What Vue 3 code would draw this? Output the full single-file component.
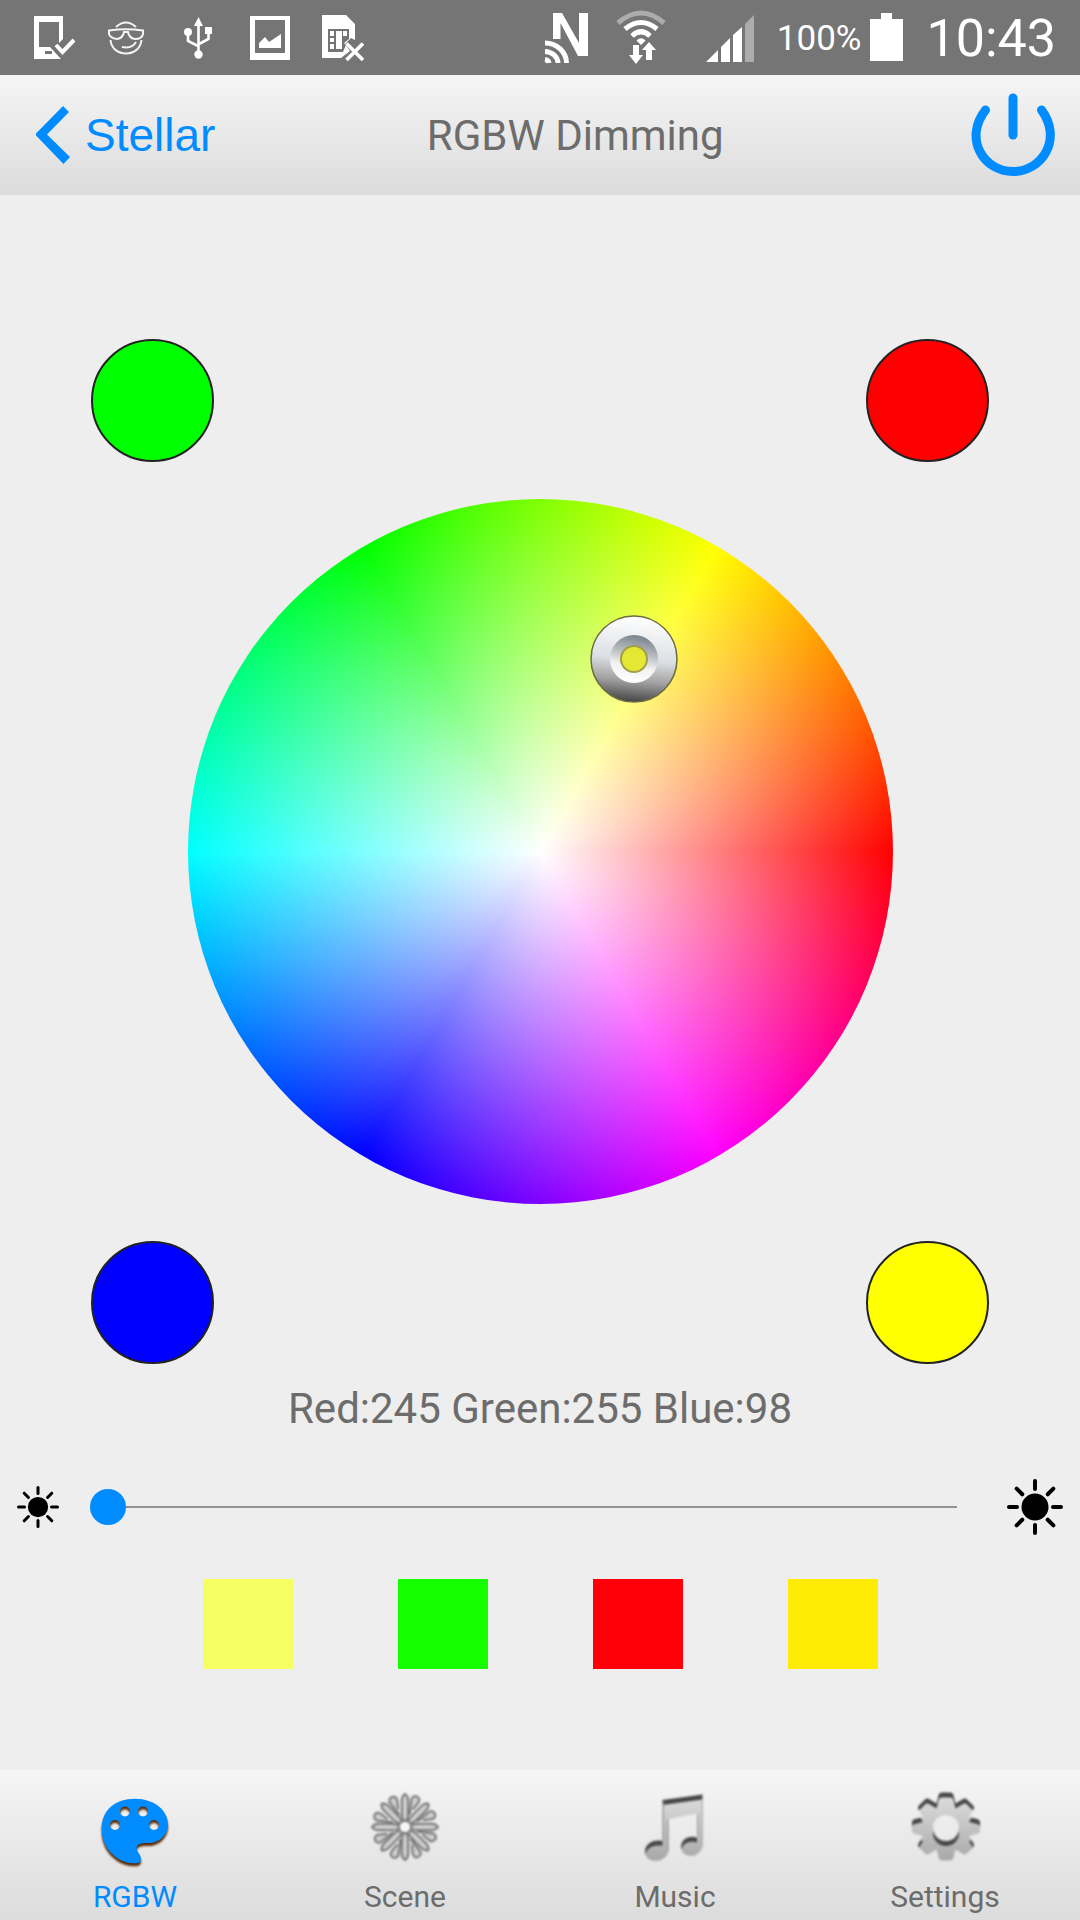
<script setup>
import { ref } from 'vue'

const brightness = ref(0)
const topPresets = [
  { name: 'Green', color: '#00ff00' },
  { name: 'Red', color: '#ff0000' },
]
const bottomPresets = [
  { name: 'Blue', color: '#0000ff' },
  { name: 'Yellow', color: '#ffff00' },
]
const swatches = ['#f6ff62', '#16ff00', '#ff0009', '#ffec06']
const eighths = [0, 45, 90, 135, 180, 225, 270, 315]
</script>

<template>
  <div class="app">
    <header class="status">
      <div class="notices">
        <svg class="ico" width="48" height="48" viewBox="30 13 48 48" aria-hidden="true">
          <path fill="#fff" fill-rule="evenodd" d="M34 15H63V38L59 42V21H39V46H50L61 58H34ZM45 50V53H52V50Z" />
          <path fill="none" stroke="#fff" stroke-width="4" d="M56 44L62.500 51L74 39" />
        </svg>
        <svg class="ico" width="48" height="48" viewBox="102 13 48 48" fill="none" stroke="#f4f4f4" stroke-width="2" aria-hidden="true">
          <path d="M116 26Q126 17 136 26M110.500 39C112 57 140 57 141.500 39M122 46Q132 48 136 41" />
          <path d="M109 29.500Q126 27 143 29.500V33Q142 38 135 38Q129 37 128 31H124Q123 37 117 38Q110 37 109 33Z" />
        </svg>
        <svg class="ico" width="48" height="48" viewBox="174 13 48 48" aria-hidden="true">
          <path fill="none" stroke="#fff" stroke-width="2.600" d="M198.500 22V54M188 32V40L198 45M208.500 30V38L199 43" />
          <g fill="#fff">
            <path d="M198.500 16L203 25H194ZM205 26H212V33H205Z" />
            <circle cx="188" cy="31" r="4" /><circle cx="198.500" cy="53.500" r="4.200" />
          </g>
        </svg>
        <svg class="ico" width="48" height="48" viewBox="246 13 48 48" fill="#fff" aria-hidden="true">
          <path fill-rule="evenodd" d="M250 15H290V59H250ZM255 19V52H285V19Z" />
          <path d="M259 47V42L265 36L269 41L281 33V47Z" />
        </svg>
        <svg class="ico" width="48" height="48" viewBox="318 13 48 48" aria-hidden="true">
          <path fill="#fff" fill-rule="evenodd" d="M322 14H346L355 23V39L351 37L345 43L350 50L341 57H322ZM328 28V51H343L346 44L344 42L349 38V28Z" />
          <path fill="#fff" d="M330 30h4v5h-4zM336 30h6v18h-6zM343 30h4v5h-4zM330 37h4v4h-4zM330 43h4v5h-4z" />
          <path fill="none" stroke="#fff" stroke-width="3.600" d="M346.500 42.500L363 59M363 42.500L346.500 59" />
        </svg>
      </div>
      <div class="system">
        <svg class="ico" width="48" height="56" viewBox="540 8 48 56" aria-hidden="true">
          <path fill="#fff" d="M551 11H560L577 41V11H586V54H576L558.500 21V37H551Z" />
          <path fill="none" stroke="#fff" stroke-width="5" d="M543 41A21.500 20 0 0 1 564.500 61M543 49.500A13.500 12 0 0 1 556 61M543 57.500A5 4 0 0 1 547 61" />
        </svg>
        <svg class="ico" width="56" height="56" viewBox="612 8 56 56" aria-hidden="true">
          <g fill="none" stroke="#fff" stroke-width="5">
            <path stroke="#acacac" d="M617 21Q640 1 663 21" />
            <path d="M624 27Q640 14 656 27M631 34Q640 25.500 649 34" />
          </g>
          <path fill="#fff" d="M635.500 38.500Q640 34 644.500 38.500L640 43ZM632 43H638V53H642L635 62L628 53H632ZM645 58V48H641L648 40L655 48H651V58Z" />
        </svg>
        <svg class="ico" width="62" height="56" viewBox="692 8 62 56" aria-hidden="true">
          <path fill="#fff" d="M706 60L718 48V60ZM721 45L730 36V60H721ZM733 33L742 25V60H733Z" />
          <path fill="#acacac" d="M745 22L754 13V60H745Z" />
        </svg>
        <div class="charge">
          <span class="percent">100%</span>
          <svg class="ico" width="34" height="56" viewBox="871 8 34 56" aria-hidden="true">
            <path fill="#fff" d="M871 17H882V11H893V17H904V59H871Z" />
          </svg>
        </div>
        <time class="clock">10:43</time>
      </div>
    </header>

    <div class="titlebar">
      <button class="back" type="button">
        <svg width="36" height="60" viewBox="37 105 36 60" aria-hidden="true">
          <path fill="#008cff" d="M36 134.500L64 106L70 112L48 134.500L71 157L64.500 164Z" />
        </svg>
        <span>Stellar</span>
      </button>
      <h1>RGBW Dimming</h1>
      <button class="power" type="button" aria-label="Power">
        <svg width="84" height="84" viewBox="971 93 84 84" fill="none" stroke="#008cff" stroke-width="9" stroke-linecap="round" aria-hidden="true">
          <path d="M985.500 110C963 139 984 171.500 1013 171.500C1042 171.500 1063 139 1041.500 110" />
          <path d="M1013 98V135" />
        </svg>
      </button>
    </div>

    <main>
      <div class="presets">
        <button v-for="p in topPresets" :key="p.name" type="button" class="preset" :aria-label="p.name" :style="{ background: p.color }"></button>
      </div>
      <div class="wheel" role="img" aria-label="Color wheel">
        <svg class="puck" width="90" height="90" viewBox="0 0 90 90" aria-hidden="true">
          <defs>
            <linearGradient id="metal" x1=".55" y1="0" x2=".45" y2="1">
              <stop offset="0" stop-color="#fff" /><stop offset=".5" stop-color="#dcdfe3" />
              <stop offset=".75" stop-color="#a2a2a2" /><stop offset="1" stop-color="#444" />
            </linearGradient>
            <linearGradient id="rim" x1=".6" y1="0" x2=".4" y2="1">
              <stop offset="0" stop-color="#77828c" /><stop offset=".35" stop-color="#b4b8bc" />
              <stop offset=".65" stop-color="#f2f2f2" /><stop offset="1" stop-color="#fff" />
            </linearGradient>
          </defs>
          <circle cx="45" cy="45" r="43" fill="url(#metal)" stroke="#6c6c40" stroke-width="1.500" />
          <circle cx="45" cy="45" r="24" fill="url(#rim)" />
          <circle cx="45" cy="45" r="13" fill="#e4e832" stroke="#a0a04c" stroke-width="2" />
        </svg>
      </div>
      <div class="presets">
        <button v-for="p in bottomPresets" :key="p.name" type="button" class="preset" :aria-label="p.name" :style="{ background: p.color }"></button>
      </div>
      <p class="readout">Red:245 Green:255 Blue:98</p>
      <div class="dimmer">
        <svg width="42" height="42" viewBox="-28 -28 56 56" aria-hidden="true">
          <circle r="13.500" />
          <path v-for="a in eighths" :key="a" d="M0 -18V-26" stroke="#000" stroke-width="4" stroke-linecap="round" :transform="`rotate(${a})`" />
        </svg>
        <input v-model="brightness" type="range" min="0" max="100" aria-label="Brightness">
        <svg width="56" height="56" viewBox="-28 -28 56 56" aria-hidden="true">
          <circle r="13.500" />
          <path v-for="a in eighths" :key="a" d="M0 -18V-26" stroke="#000" stroke-width="4" stroke-linecap="round" :transform="`rotate(${a})`" />
        </svg>
      </div>
      <div class="swatches">
        <button v-for="c in swatches" :key="c" type="button" :aria-label="c" :style="{ background: c }"></button>
      </div>
    </main>

    <nav class="tabs">
      <button type="button" class="active">
        <svg class="palette" width="80" height="80" viewBox="0 0 80 80" aria-hidden="true">
          <path fill="#008cff" fill-rule="evenodd" d="M40 8.700C60 8.700 73 21 73 34C73 46 63 53 54 53C48 53 42 53 41.500 58C41.500 62 46 64 46 69C46 73 42 73.500 38 73.300C20 72 6.700 57 6.700 39C6.700 20 20 8.700 40 8.700ZM25 21.500a5 5 0 1 0 10 0a5 5 0 1 0 -10 0M43 21.500a5 5 0 1 0 10 0a5 5 0 1 0 -10 0M15 35a5 5 0 1 0 10 0a5 5 0 1 0 -10 0M54 35a5 5 0 1 0 10 0a5 5 0 1 0 -10 0" />
        </svg>
        <span>RGBW</span>
      </button>
      <button type="button">
        <svg class="soft" width="80" height="80" viewBox="-40 -37 80 80" aria-hidden="true">
          <g fill="#cecece" stroke="#747474" stroke-width="2" stroke-linejoin="round">
            <g v-for="a in eighths" :key="a" :transform="`rotate(${a})`">
              <path transform="rotate(21)" d="M0 -13L-3.600 -27A4 4 0 1 1 3.600 -27L1 -19" />
              <path d="M-1.500 -6Q-3.200 -9 -3.200 -14V-27Q-3 -31 0 -33Q3 -31 3.200 -27V-14Q3.200 -9 1.500 -6Z" />
            </g>
            <circle r="5" fill="#f6f6f6" stroke="none" />
          </g>
        </svg>
        <span>Scene</span>
      </button>
      <button type="button">
        <svg class="soft" width="80" height="80" viewBox="0 0 80 80" aria-hidden="true">
          <defs>
            <linearGradient id="steel" x1="0" y1="0" x2="0" y2="1">
              <stop offset="0" stop-color="#dedede" /><stop offset=".85" stop-color="#a6a6a6" />
            </linearGradient>
            <mask id="note">
              <path fill="#fff" d="M27.500 10L67.500 4.500V55C67.500 61 62 66 56 66C50 66 46 62 46 57C46 49 54 45 62 47.500V23.500L33.500 29V60C33.500 66 27 71 21 71C14 71 10 67 10 62C10 54 18 49 27.500 51Z" />
            </mask>
          </defs>
          <g mask="url(#note)">
            <rect width="80" height="80" fill="#484848" />
            <g transform="translate(0 5)"><rect width="80" height="80" fill="url(#steel)" mask="url(#note)" /></g>
            <path fill="none" stroke="#8c8c8c" stroke-width="1.500" d="M28 13V50M33 29V60M62 24V46M67.500 9V55" />
          </g>
        </svg>
        <span>Music</span>
      </button>
      <button type="button">
        <svg class="soft" width="80" height="80" viewBox="0 0 80 80" aria-hidden="true">
          <defs>
            <mask id="cog">
              <g transform="translate(41 36.500)">
                <circle r="25" fill="#fff" />
                <path v-for="a in eighths" :key="a" fill="#fff" d="M-10 -21L-7.500 -31Q-7 -34 -4 -34H4Q7 -34 7.500 -31L10 -21Z" :transform="`rotate(${a})`" />
                <circle cy="1.500" r="13" fill="#000" />
              </g>
            </mask>
          </defs>
          <g mask="url(#cog)">
            <rect width="80" height="80" fill="#484848" />
            <g transform="translate(0 5)"><rect width="80" height="80" fill="url(#steel)" mask="url(#cog)" /></g>
          </g>
        </svg>
        <span>Settings</span>
      </button>
    </nav>
  </div>
</template>

<style>
body {
  background: #eee;
}
</style>

<style scoped>
.app {
  display: flex;
  flex-direction: column;
  min-height: 100vh;
  background: #eee;
  color: #6c6c6c;
  font-family: Roboto, sans-serif;
}
button {
  margin: 0;
  padding: 0;
  border: 0;
  background: none;
  font: inherit;
  color: inherit;
}
svg {
  display: block;
  flex: none;
}
.status {
  display: flex;
  justify-content: space-between;
  align-items: center;
  height: 75px;
  padding: 0 24px 0 30px;
  background: #757575;
  color: #fff;
}
.notices,
.system {
  display: flex;
  align-items: center;
  gap: 24px;
}
.system {
  gap: 23px;
}
.charge {
  display: flex;
  align-items: center;
  gap: 8px;
}
.percent {
  padding-top: 2px;
  font-size: 35px;
  line-height: 48px;
}
.clock {
  padding-top: 2px;
  font-size: 52px;
  line-height: 72px;
}
.titlebar {
  display: flex;
  align-items: center;
  height: 120px;
  background: linear-gradient(#f5f5f5, #dcdcdc);
}
.back {
  display: flex;
  align-items: center;
  gap: 13px;
  padding-left: 36px;
  color: #008cff;
  font-family: "Liberation Sans", Arial, sans-serif;
  font-size: 46px;
  line-height: 56px;
}
h1 {
  flex: 1;
  margin: 0;
  padding-top: 2px;
  text-align: center;
  font-size: 42px;
  line-height: 48px;
  font-weight: 400;
}
.power {
  padding: 0 25px 0 36px;
}
main {
  flex: 1;
  display: flex;
  flex-direction: column;
  padding-top: 144px;
}
.presets {
  display: flex;
  justify-content: space-between;
  padding: 0 91px;
}
.preset {
  width: 123px;
  height: 123px;
  border: 2px solid #222;
  border-radius: 50%;
}
.wheel {
  position: relative;
  width: 705px;
  max-width: 100%;
  aspect-ratio: 1;
  margin: 37px auto;
  border-radius: 50%;
  background:
    radial-gradient(closest-side, #fff, rgba(255, 255, 255, 0)),
    conic-gradient(from 90deg, #f00, #f0f, #00f, #0ff, #0f0, #ff0, #f00);
}
.puck {
  position: absolute;
  left: 401px;
  top: 115px;
}
.readout {
  margin: 21px 0 46px;
  text-align: center;
  font-size: 42px;
  line-height: 48px;
}
.dimmer {
  display: flex;
  align-items: center;
  padding: 0 17px;
}
.dimmer input {
  flex: 1;
  min-width: 0;
  height: 36px;
  margin: 0 50px 0 31px;
  appearance: none;
  background: none;
}
.dimmer input::-webkit-slider-runnable-track {
  height: 2px;
  background: #929292;
}
.dimmer input::-webkit-slider-thumb {
  appearance: none;
  width: 36px;
  height: 36px;
  margin-top: -17px;
  border-radius: 50%;
  background: #008cff;
}
.swatches {
  display: flex;
  justify-content: center;
  gap: 105px;
  padding: 44px 0;
}
.swatches button {
  width: 90px;
  height: 90px;
}
.tabs {
  display: flex;
  height: 150px;
  background: linear-gradient(#f5f5f5, #dcdcdc);
}
.tabs button {
  flex: 1;
  display: flex;
  flex-direction: column;
  align-items: center;
  gap: 9px;
  padding-top: 20px;
  font-size: 30px;
  line-height: 36px;
}
.tabs .active {
  color: #008cff;
}
.palette {
  filter: drop-shadow(0 3px 1px #5a2d0a);
}
.soft {
  filter: blur(1px);
}
</style>
